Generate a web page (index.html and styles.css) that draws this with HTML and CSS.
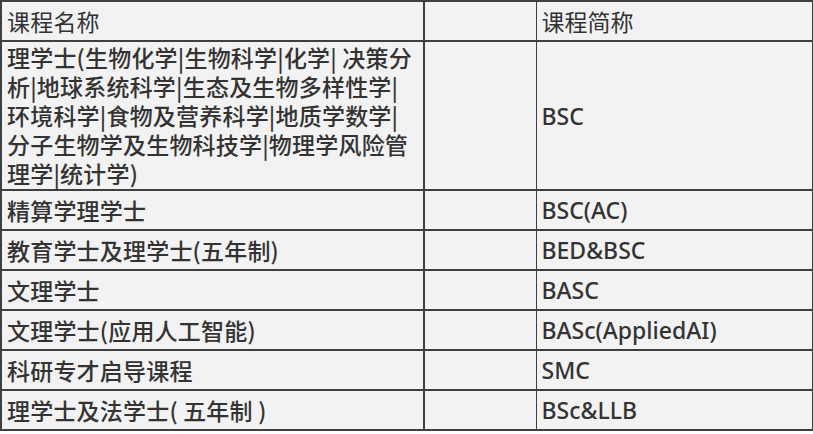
FILE: index.html
```html
<!DOCTYPE html>
<html lang="zh-CN">
<head>
<meta charset="utf-8">
<title>课程</title>
<link rel="stylesheet" href="styles.css">
</head>
<body>
<table class="courses">
  <colgroup>
    <col class="c-name">
    <col class="c-blank">
    <col class="c-abbr">
  </colgroup>
  <thead>
    <tr>
      <th class="name">课程名称</th>
      <th class="blank"></th>
      <th class="abbr">课程简称</th>
    </tr>
  </thead>
  <tbody>
    <tr>
      <td class="name multi">理学士(生物化学|生物科学|化学| 决策分<br>析|地球系统科学|生态及生物多样性学|<br>环境科学|食物及营养科学|地质学数学|<br>分子生物学及生物科技学|物理学风险管<br>理学|统计学)</td>
      <td class="blank"></td>
      <td class="abbr">BSC</td>
    </tr>
    <tr><td class="name">精算学理学士</td><td class="blank"></td><td class="abbr">BSC(AC)</td></tr>
    <tr><td class="name">教育学士及理学士(五年制)</td><td class="blank"></td><td class="abbr">BED&amp;BSC</td></tr>
    <tr><td class="name">文理学士</td><td class="blank"></td><td class="abbr">BASC</td></tr>
    <tr><td class="name">文理学士(应用人工智能)</td><td class="blank"></td><td class="abbr">BASc(AppliedAI)</td></tr>
    <tr><td class="name">科研专才启导课程</td><td class="blank"></td><td class="abbr">SMC</td></tr>
    <tr><td class="name">理学士及法学士( 五年制 )</td><td class="blank"></td><td class="abbr">BSc&amp;LLB</td></tr>
  </tbody>
</table>
</body>
</html>
```

FILE: styles.css
```css
html, body {
  margin: 0;
  padding: 0;
  background: #ffffff;
}

.courses {
  border-collapse: collapse;
  width: 812px;
  table-layout: fixed;
  background: #f2f2f2;
  color: #333333;
  font-family: "Noto Sans CJK SC", "Noto Sans", sans-serif;
  font-size: 23px;
  line-height: 30px;
  border: 2px solid #3f3f3f;
}

.c-name { width: 423px; }
.c-blank { width: 112px; }
.c-abbr { width: 277px; }

.courses th,
.courses td {
  padding: 4px 5px;
  text-align: left;
  vertical-align: middle;
  border-top: 2px solid #3f3f3f;
  border-bottom: 2px solid #3f3f3f;
  white-space: nowrap;
}

.courses th {
  font-weight: 400;
}

.courses td {
  font-weight: 500;
}

.courses .name {
  border-right: 2px solid #3f3f3f;
  letter-spacing: 0.2px;
}

.courses .blank {
  border-right: 1px solid #3f3f3f;
}

.courses td.abbr {
  font-family: "Noto Sans", "Noto Sans CJK SC", sans-serif;
}

.courses td.multi {
  line-height: 29px;
  padding-top: 1px;
  padding-bottom: 1px;
}
```
